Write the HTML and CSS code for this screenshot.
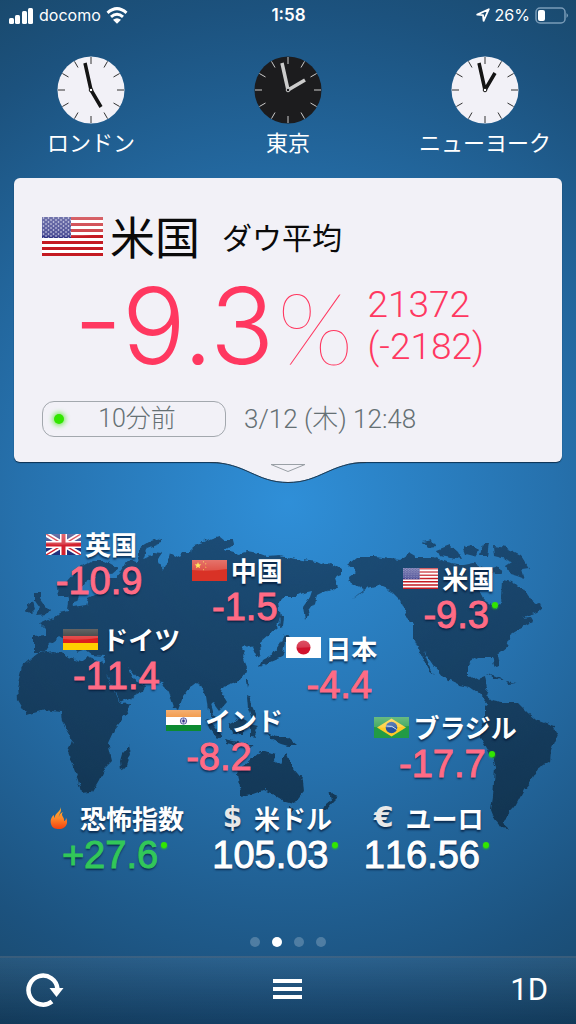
FILE: index.html
```html
<!DOCTYPE html>
<html lang="ja">
<head>
  <meta charset="UTF-8">
  <meta name="viewport" content="width=device-width, initial-scale=1.0">
  <title>世界の株価</title>
  <link rel="stylesheet" href="styles.css">
</head>
<body>
  <!-- Shared shapes -->
  <svg class="defs" width="0" height="0" aria-hidden="true">
    <defs>
      <linearGradient id="gloss" x1="0" y1="0" x2="0" y2="1">
        <stop offset="0" stop-color="#fff" stop-opacity="0.32" />
        <stop offset="1" stop-color="#fff" stop-opacity="0.16" />
      </linearGradient>
      <linearGradient id="land" x1="0" y1="0" x2="0" y2="1">
        <stop offset="0" stop-color="#173b5d" stop-opacity="0.78" />
        <stop offset="1" stop-color="#0e283e" stop-opacity="0.78" />
      </linearGradient>
      <linearGradient id="fire" x1="0" y1="0" x2="0" y2="1">
        <stop offset="0" stop-color="#ffb12e" />
        <stop offset="0.5" stop-color="#ff8a2b" />
        <stop offset="1" stop-color="#f4410f" />
      </linearGradient>
      <filter id="coast" x="-2%" y="-2%" width="104%" height="104%" color-interpolation-filters="sRGB">
        <feTurbulence type="fractalNoise" baseFrequency="0.14" numOctaves="2" seed="4" result="noise" />
        <feDisplacementMap in="SourceGraphic" in2="noise" scale="6" xChannelSelector="R" yChannelSelector="G" />
      </filter>
      <pattern id="stars" width="5" height="4" patternUnits="userSpaceOnUse">
        <circle cx="1.5" cy="1" r="0.8" fill="#d8d8ec" />
        <circle cx="4" cy="3" r="0.8" fill="#d8d8ec" />
      </pattern>
    </defs>
    <symbol id="ticks" viewBox="-34 -34 68 68">
      <path d="M0-33v7M0 33v-7M-33 0h7M33 0h-7M16.5-28.6l-3.5 6.1M28.6-16.5l-6.1 3.5M28.6 16.5l-6.1-3.5M16.5 28.6l-3.5-6.1M-16.5 28.6l3.5-6.1M-28.6 16.5l6.1-3.5M-28.6-16.5l6.1 3.5M-16.5-28.6l3.5 6.1" />
    </symbol>
    <symbol id="flag-us" viewBox="0 0 61 39" preserveAspectRatio="none">
      <path fill="#fff" d="M0 0h61v39H0z" />
      <path stroke="#c41a22" stroke-width="3" d="M0 1.5h61M0 7.5h61M0 13.5h61M0 19.5h61M0 25.5h61M0 31.5h61M0 37.5h61" />
      <path fill="#2c2f83" d="M0 0h29v21H0z" />
      <path fill="url(#stars)" d="M0 0h29v21H0z" />
      <path fill="url(#gloss)" d="M0 0h61v17Q30 21 0 19z" />
    </symbol>
    <symbol id="flag-uk" viewBox="0 0 35 21">
      <path fill="#22307c" d="M0 0h35v21H0z" />
      <path stroke="#fff" stroke-width="5" d="M0 0l35 21M35 0L0 21" />
      <path stroke="#d3202d" stroke-width="1.5" d="M0 0l35 21M35 0L0 21" />
      <path stroke="#fff" stroke-width="7" d="M17.500 0v21M0 10.500h35" />
      <path stroke="#d3202d" stroke-width="4" d="M17.500 0v21M0 10.500h35" />
      <path fill="url(#gloss)" d="M0 0h35v9Q17 12 0 10z" />
    </symbol>
    <symbol id="flag-cn" viewBox="0 0 35 21">
      <path fill="#d93226" d="M0 0h35v21H0z" />
      <path fill="#ffe12b" d="M6 2l.9 2.200 2.400.2-1.800 1.500.6 2.300L6 6.900 3.900 8.200l.6-2.300-1.800-1.500 2.400-.2zM11 1l1 .8-1 1zM13.500 3l1 1-1.200.6zM13.500 6.500l1 .8-1 .8zM11 9l1 .8-1 .8z" />
      <path fill="url(#gloss)" d="M0 0h35v9Q17 12 0 10z" />
    </symbol>
    <symbol id="flag-de" viewBox="0 0 35 21">
      <path fill="#1c1c1c" d="M0 0h35v7H0z" />
      <path fill="#dd1d1d" d="M0 7h35v7H0z" />
      <path fill="#ffce00" d="M0 14h35v7H0z" />
      <path fill="url(#gloss)" d="M0 0h35v9Q17 12 0 10z" />
    </symbol>
    <symbol id="flag-jp" viewBox="0 0 35 21">
      <path fill="#fff" d="M0 0h35v21H0z" />
      <circle cx="17.500" cy="10.500" r="7" fill="#d0122d" />
      <path fill="url(#gloss)" d="M0 0h35v9Q17 12 0 10z" />
    </symbol>
    <symbol id="flag-in" viewBox="0 0 35 21">
      <path fill="#fff" d="M0 0h35v21H0z" />
      <path fill="#f08a2e" d="M0 0h35v7H0z" />
      <path fill="#0c8a30" d="M0 15h35v6H0z" />
      <circle cx="17.500" cy="11" r="3.200" fill="none" stroke="#4a4a9a" stroke-width="0.900" />
      <path stroke="#4a4a9a" stroke-width="0.600" d="M14.500 11h6M17.500 8v6M15.400 8.900l4.200 4.200M19.600 8.900l-4.200 4.200" />
      <circle cx="17.500" cy="11" r="1.200" fill="#33338a" />
      <path fill="url(#gloss)" d="M0 0h35v7H0z" />
    </symbol>
    <symbol id="flag-br" viewBox="0 0 35 21">
      <path fill="#229b45" d="M0 0h35v21H0z" />
      <path fill="#ffca28" d="M17.500 1.500L32 10.500l-14.500 9L3 10.500z" />
      <circle cx="17.500" cy="10.500" r="5.800" fill="#25529e" />
      <path fill="none" stroke="#cfe0ee" d="M12.200 9q6-1 10.500 3.500" />
      <path fill="url(#gloss)" d="M0 0h35v9Q17 12 0 10z" />
    </symbol>
  </svg>

  <div class="app">
    <header class="status">
      <div class="status-left">
        <svg width="26" height="17" viewBox="0 0 26 17" fill="#fff" aria-hidden="true">
          <rect x="1" y="11" width="5" height="6" rx="1.500" />
          <rect x="7" y="8" width="5" height="9" rx="1.500" />
          <rect x="14" y="4" width="5" height="13" rx="1.500" />
          <rect x="20" y="1" width="5" height="16" rx="1.500" />
        </svg>
        <span>docomo</span>
        <svg width="22" height="17" viewBox="0 0 22 17" aria-hidden="true">
          <g fill="none" stroke="#fff" stroke-width="3">
            <path d="M1.500 5.800Q11-2.600 20.500 5.800" />
            <path d="M5 9.800q6-5.200 12 0" />
          </g>
          <path fill="#fff" d="M7 12.800q4-3 8 0l-4 4z" />
        </svg>
      </div>
      <time class="status-time">1:58</time>
      <div class="status-right">
        <svg width="14" height="14" viewBox="0 0 14 14" aria-hidden="true">
          <path fill="none" stroke="#fff" stroke-width="1.800" stroke-linejoin="round" d="M1.200 6.600L12.800 1.200 7.600 12.800 7 7.200z" />
        </svg>
        <span>26%</span>
        <svg width="34" height="17" viewBox="0 0 34 17" aria-hidden="true">
          <rect x="1" y="1" width="29" height="15" rx="4" fill="none" stroke="#7a9cb8" stroke-width="1.500" />
          <rect x="3" y="3" width="7" height="11" rx="2" fill="#fff" />
          <path fill="#7a9cb8" d="M31.500 6q3 2.500 0 5z" />
        </svg>
      </div>
    </header>

    <section class="clocks">
      <figure class="clock">
        <svg width="68" height="68" viewBox="-34 -34 68 68">
          <circle r="33.500" fill="#f2f1f7" />
          <use href="#ticks" x="-34" y="-34" width="68" height="68" stroke="#333" />
          <path stroke="#141414" stroke-width="3.500" d="M0 0l-6-27M0 0l10 17" />
          <circle r="1.800" fill="#fff" stroke="#141414" />
        </svg>
        <figcaption>ロンドン</figcaption>
      </figure>
      <figure class="clock">
        <svg width="68" height="68" viewBox="-34 -34 68 68">
          <circle r="33.500" fill="#1c1c1e" />
          <use href="#ticks" x="-34" y="-34" width="68" height="68" stroke="#ccc" />
          <path stroke="#ccc" stroke-width="3.500" d="M0 0l-6-27M0 0l17-10" />
          <circle r="1.800" fill="#1c1c1e" stroke="#ccc" />
        </svg>
        <figcaption>東京</figcaption>
      </figure>
      <figure class="clock">
        <svg width="68" height="68" viewBox="-34 -34 68 68">
          <circle r="33.500" fill="#f2f1f7" />
          <use href="#ticks" x="-34" y="-34" width="68" height="68" stroke="#333" />
          <path stroke="#141414" stroke-width="3.500" d="M0 0l-6-27M0 0l10-17" />
          <circle r="1.800" fill="#fff" stroke="#141414" />
        </svg>
        <figcaption>ニューヨーク</figcaption>
      </figure>
    </section>

    <article class="card">
      <div class="card-title">
        <svg width="61" height="39"><use href="#flag-us" width="61" height="39" /></svg>
        <h1>米国</h1>
        <h2>ダウ平均</h2>
      </div>
      <div class="card-quote">
        <span class="change">-9.3</span>
        <span class="percent">%</span>
        <div class="price">
          <span>21372</span>
          <span>(-2182)</span>
        </div>
      </div>
      <div class="card-time">
        <button type="button" class="ago"><span class="glow"></span>10分前</button>
        <time>3/12 (木) 12:48</time>
      </div>
      <button type="button" class="card-toggle" aria-label="詳細">
        <svg width="156" height="22" viewBox="0 0 156 22">
          <path fill="#f2f1f7" d="M0 0h156C121 0 110 20 78 20S35 0 0 0z" />
          <path fill="none" stroke="#20364a" d="M0 .5C35 .5 46 20.500 78 20.500S121 .5 156 .5" />
          <path fill="none" stroke="#9aa0a6" d="M61 2.500h34L78 9.500z" />
        </svg>
      </button>
    </article>

    <main class="map">
      <svg class="world" viewBox="0 0 576 330" aria-hidden="true">
        <path filter="url(#coast)" fill="url(#land)" d="
          M34 132V116L46 115V110L40 104 51 99 59 92 68 90 69 80 72 78 73 87 86 85 88 78 96 74 108 72 96 71 90 66 96 57 87 60 81 70 77 82 71 84 68 76 59 76 58 67 68 61 80 47 92 41 104 41 118 49 112 54 104 52 106 58 116 58 123 47 126 40 137 42 148 37 153 32 163 33 158 40 163 50 168 40 170 33 180 38 184 32 192 32 193 25 203 22 213 18 220 16 225 20 233 20 234 24 225 30 237 33 247 31 258 33 266 36 280 35 300 40 317 42 323 45 330 43 342 50 342 55 335 58 338 67 323 73 317 76 315 83 308 93 305 99 303 87 310 77 312 71 303 73 295 77 283 77 278 82 280 97 277 107 268 115 260 122 261 134 256 137 252 128 245 123 241 127 246 132 243 137 247 147 245 153 238 162 229 165 222 168 221 172 227 182 220 190 214 182 210 184 213 195 218 200 214 201 208 190 206 176 198 162 190 168 183 177 178 190 173 187 168 172 162 163 147 161 138 158 129 147 134 160 145 165 143 172 121 183 114 170 103 148 105 136 92 135 84 129 78 131 68 122 60 117 50 124 44 132z
          M38 133L53 131 63 132 68 138 80 142 87 137 100 142 104 146 107 157 117 177 121 184 131 183 129 191 114 210 108 223 112 240 105 247 99 260 92 272 81 273 77 257 68 233 72 220 62 202 61 192 44 190 27 195 18 180 17 167 22 147z
          M129 226L131 233 126 248 121 250 120 241 122 234z
          M35 73L41 73 40 78 45 85 50 90 47 94 36 95 40 88 35 81z
          M27 85L33 82 35 88 30 93 25 91z
          M138 42L140 28 150 22 162 18 162 22 147 28 143 40z
          M287 116L293 118 285 124 282 137 270 142 259 147 262 140 273 134 280 123 284 115z
          M280 95L283 97 282 107 279 108z
          M246 160L249 160 247 166z
          M247 176L251 178 252 187 256 196 252 199 248 188z
          M206 199L212 203 222 216 218 219 209 208z
          M224 219L238 222 253 226 250 228 226 223z
          M229 204L240 198 247 202 243 214 232 214z
          M250 204L258 206 253 211 256 218 250 217z
          M266 213L276 217 287 217 298 226 288 226 281 224 272 220z
          M237 253L242 248 253 238 260 232 266 232 275 235 274 241 281 245 286 231 292 247 303 260 304 272 294 284 283 281 275 275 264 270 253 274 241 276 239 267z
          M288 286L294 288 291 293 288 291z
          M329 270L333 275 338 277 334 281 328 288 322 292 326 284 331 280z
          M347 44L356 37 375 37 400 40 410 33 417 37 433 37 447 42 463 45 473 43 485 47 493 52 488 60 478 67 484 79 497 88 502 78 503 60 512 62 517 67 523 67 532 80 543 87 537 92 522 98 530 97 533 102 518 110 510 115 507 127 497 135 499 146 495 147 492 138 477 138 468 143 468 155 475 160 485 156 487 167 485 175 492 181 500 184 490 186 480 174 470 167 460 165 443 157 433 145 423 130 428 142 435 154 426 146 413 117 413 103 407 97 400 80 390 70 378 65 368 68 351 81 364 70 351 65 349 57 356 52z
          M423 22L432 20 436 27 428 28z
          M437 30L450 25 458 32 462 40 450 38 440 36z
          M463 26L472 24 478 30 474 36 466 34z
          M483 24L490 24 488 36 480 36z
          M493 26L507 28 521 35 529 48 522 49 525 59 517 56 510 54 506 46 512 42 502 38 494 36z
          M492 48L499 46 502 54 494 54z
          M487 153L497 156 504 161 494 158z
          M505 161L517 163 508 164z
          M485 186L491 181 501 183 518 183 528 193 536 200 555 207 558 213 551 230 550 242 538 250 531 262 524 270 515 287 506 297 501 302 509 309 501 308 495 300 491 290 493 277 495 247 488 230 480 216 480 208 485 200z" />
      </svg>

      <div class="pins">
        <div class="pin" style="left: 8%; top: 5%">
          <h3><svg width="35" height="21"><use href="#flag-uk" width="35" height="21" /></svg>英国</h3>
          <p class="down">-10.9</p>
        </div>
        <div class="pin" style="left: 33.3%; top: 14.3%">
          <h3><svg width="35" height="21"><use href="#flag-cn" width="35" height="21" /></svg>中国</h3>
          <p class="down">-1.5</p>
        </div>
        <div class="pin" style="left: 70%; top: 17.2%">
          <h3><svg width="35" height="21"><use href="#flag-us" width="35" height="21" /></svg>米国</h3>
          <p class="down"><span class="live">-9.3</span></p>
        </div>
        <div class="pin" style="left: 11%; top: 39%">
          <h3><svg width="35" height="21"><use href="#flag-de" width="35" height="21" /></svg>ドイツ</h3>
          <p class="down">-11.4</p>
        </div>
        <div class="pin" style="left: 49.7%; top: 42%">
          <h3><svg width="35" height="21"><use href="#flag-jp" width="35" height="21" /></svg>日本</h3>
          <p class="down">-4.4</p>
        </div>
        <div class="pin" style="left: 28.8%; top: 68%">
          <h3><svg width="35" height="21"><use href="#flag-in" width="35" height="21" /></svg>インド</h3>
          <p class="down">-8.2</p>
        </div>
        <div class="pin pin-wide" style="left: 65%; top: 70.5%">
          <h3><svg width="35" height="21"><use href="#flag-br" width="35" height="21" /></svg>ブラジル</h3>
          <p class="down"><span class="live">-17.7</span></p>
        </div>
      </div>

      <div class="rates">
        <div class="rate">
          <h3>
            <svg width="18" height="24" viewBox="0 0 18 24"><path fill="url(#fire)" d="M10 1c2 4-6 6-5 11-1-1-1-2-1-3-3 2-4 6-3 9 1 4 4 5 8 5s7-2 8-6c0-2 0-4-1-5 0 2-1 3-2 3 1-4-4-5-1-9-3 1-4 3-4 5-1-3 4-5 1-10z" /></svg>
            恐怖指数
          </h3>
          <p class="up"><span class="live">+27.6</span></p>
        </div>
        <div class="rate">
          <h3><span class="symbol">$</span>米ドル</h3>
          <p><span class="live">105.03</span></p>
        </div>
        <div class="rate">
          <h3><span class="symbol">€</span>ユーロ</h3>
          <p><span class="live">116.56</span></p>
        </div>
      </div>
    </main>

    <nav class="pages">
      <button type="button" aria-label="1"></button>
      <button type="button" aria-label="2" class="active"></button>
      <button type="button" aria-label="3"></button>
      <button type="button" aria-label="4"></button>
    </nav>

    <footer class="toolbar">
      <button type="button" aria-label="更新">
        <svg width="38" height="38" viewBox="0 0 38 38">
          <path fill="none" stroke="#fff" stroke-width="4.500" d="M26 31.500A14.500 14.500 0 1 1 31.500 19" />
          <path fill="#fff" d="M23.500 18h14l-7 9z" />
        </svg>
      </button>
      <button type="button" aria-label="メニュー">
        <svg width="29" height="20" viewBox="0 0 29 20"><path stroke="#fff" stroke-width="4" d="M0 2h29M0 10h29M0 18h29" /></svg>
      </button>
      <button type="button">1D</button>
    </footer>
  </div>
</body>
</html>
```
FILE: styles.css
```css
:root {
  --card-bg: #f2f1f7;
  --red: #ff3860;
  --down: #ff6b85;
  --up: #32c759;
  --live: #32e600;
  --gray: #657074;
}

* {
  margin: 0;
  padding: 0;
  box-sizing: border-box;
}

body {
  font-family: Inter, "Noto Sans CJK JP", sans-serif;
  color: #fff;
  background-color: #1a4a70;
}

button {
  font: inherit;
  color: inherit;
  background: none;
  border: none;
  cursor: pointer;
}

svg {
  display: block;
  flex-shrink: 0;
}

h1, h2, h3 {
  font-weight: inherit;
}

.defs {
  position: absolute;
}

.app {
  min-height: 100vh;
  display: flex;
  flex-direction: column;
  background: radial-gradient(ellipse 110% 62% at 50% 49%, #2f8fd8 0%, #2671ad 42%, #1c527e 78%, #184463 100%);
}

/* Status bar */
.status {
  display: grid;
  grid-template-columns: 1fr auto 1fr;
  align-items: center;
  height: 30px;
  padding: 0 7px 0 8px;
  font-size: 16px;
}

.status-left,
.status-right {
  display: flex;
  align-items: center;
  gap: 5px;
}

.status-right {
  justify-content: flex-end;
}

.status-time {
  font-size: 17px;
  font-weight: 600;
}

/* Clocks */
.clocks {
  display: flex;
  justify-content: space-between;
  padding: 26px 25px 0;
}

.clock {
  width: 132px;
  display: flex;
  flex-direction: column;
  align-items: center;
}

.clock figcaption {
  font-family: "Noto Sans CJK JP", sans-serif;
  font-size: 22px;
  line-height: 34px;
  white-space: nowrap;
}

/* Main card */
.card {
  position: relative;
  margin: 20px 14px 0;
  padding: 28px 28px 25px;
  border-radius: 6px;
  background-color: var(--card-bg);
  box-shadow: 0 1px 1px rgba(0, 20, 40, 0.7);
  font-family: Roboto, "Noto Sans CJK JP", sans-serif;
}

.card-title {
  display: flex;
  align-items: center;
  height: 60px;
  color: #0a0a0a;
  font-family: "Noto Sans CJK JP", sans-serif;
}

.card-title h1 {
  margin-left: 7px;
  font-size: 45px;
  font-weight: 400;
  line-height: 60px;
}

.card-title h2 {
  margin-left: 22px;
  font-size: 30px;
  font-weight: 400;
  line-height: 60px;
}

.card-quote {
  display: flex;
  align-items: center;
  height: 120px;
  padding-left: 32px;
  color: var(--red);
  font-weight: 300;
}

.change {
  font-family: Inter, sans-serif;
  font-size: 106px;
  line-height: 120px;
}

.percent {
  margin-left: 3px;
  font-family: Lato, sans-serif;
  font-size: 100px;
  font-weight: 100;
  line-height: 120px;
}

.price {
  display: flex;
  flex-direction: column;
  margin-left: 14px;
  font-size: 37px;
  line-height: 42px;
}

.card-time {
  display: flex;
  align-items: center;
  gap: 18px;
  margin-top: 15px;
  color: var(--gray);
  font-size: 26px;
  line-height: 36px;
}

.card-time time {
  font-weight: 300;
}

.ago {
  position: relative;
  width: 184px;
  height: 36px;
  padding-left: 6px;
  border: 1px solid #a3a8ae;
  border-radius: 12px;
  font-size: 25px;
  font-weight: 300;
  line-height: 34px;
}

.glow {
  position: absolute;
  left: 11px;
  top: 12px;
  width: 10px;
  height: 10px;
  border-radius: 50%;
  background-color: var(--live);
  box-shadow: 0 0 4px 2px rgba(50, 230, 0, 0.5);
}

.card-toggle {
  position: absolute;
  top: 100%;
  left: 50%;
  transform: translateX(-50%);
}

/* World map */
.map {
  position: relative;
  margin-top: 58px;
  text-shadow: 0 2px 2px rgba(0, 20, 50, 0.7);
}

.world {
  position: absolute;
  top: 0;
  left: 0;
  width: 100%;
}

.pins {
  position: relative;
  width: 100%;
  aspect-ratio: 576 / 280;
}

.pin {
  position: absolute;
}

.pin h3,
.rate h3 {
  display: flex;
  align-items: center;
  gap: 4px;
  height: 24px;
  margin-bottom: 1px;
  font-family: "Noto Sans CJK JP", sans-serif;
  font-size: 26px;
  font-weight: 700;
  line-height: 20px;
  padding-bottom: 4px;
  white-space: nowrap;
}

.pin p,
.rate p {
  font-family: "Liberation Sans", Arial, sans-serif;
  font-size: 38px;
  font-kerning: none;
  line-height: 44px;
  text-align: center;
  -webkit-text-stroke: 1px currentColor;
}

.pin p {
  width: 106px;
}

.pin-wide p {
  width: 136px;
}

.down {
  color: var(--down);
}

.up {
  color: var(--up);
}

.live {
  position: relative;
}

.live::after {
  content: "";
  position: absolute;
  top: 8px;
  right: -9px;
  width: 6px;
  height: 6px;
  border-radius: 50%;
  background-color: var(--live);
  box-shadow: 0 1px 2px rgba(50, 230, 0, 0.8);
}

/* Rates under the map */
.rates {
  position: relative;
  display: flex;
  justify-content: space-between;
  padding: 8px 89px 0 50px;
}

.rate h3 {
  gap: 12px;
  justify-content: center;
}

.rate p {
  margin: 0 7px 0 -7px;
}

.symbol {
  font-family: "DejaVu Sans", sans-serif;
  font-size: 28px;
  color: #e8e8e8;
}

/* Page dots */
.pages {
  display: flex;
  justify-content: center;
  gap: 12px;
  margin-top: auto;
  padding-bottom: 9px;
}

.pages button {
  width: 10px;
  height: 10px;
  border-radius: 50%;
  background-color: rgba(255, 255, 255, 0.22);
}

.pages .active {
  background-color: #fff;
}

/* Toolbar */
.toolbar {
  display: flex;
  align-items: center;
  justify-content: space-between;
  height: 68px;
  padding: 0 28px 4px 26px;
  border-top: 2px solid rgba(255, 255, 255, 0.16);
  background: linear-gradient(rgba(255, 255, 255, 0.06), rgba(0, 20, 45, 0.28));
  font-family: Roboto, sans-serif;
  font-size: 31px;
}
```
